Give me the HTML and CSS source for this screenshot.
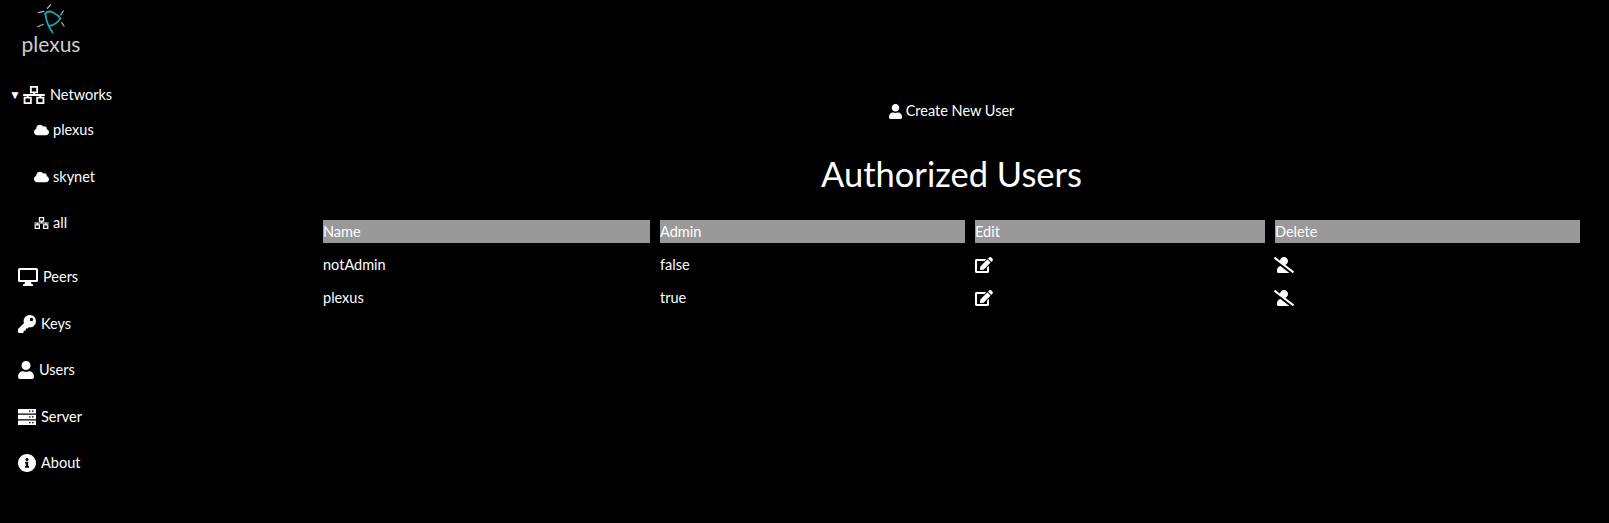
FILE: index.html
```html
<!DOCTYPE html>
<html lang="en">
<head>
<meta charset="utf-8">
<title>Plexus</title>
<link rel="stylesheet" href="styles.css">
</head>
<body>
<div class="app">
  <nav class="sidebar">
    <div class="logo">
      <svg class="logo-mark" viewBox="0 0 40 36">
        <g fill="none" stroke-linecap="round">
          <path d="M15 14 C17 11 20 11 23 12.500 C26 14 29 16.500 30.500 18.500 C28 22 24 25 19.500 26" stroke="#18a9b4" stroke-width="1.800"/>
          <path d="M15.500 14 C16 20 18.500 27 22.500 32.500" stroke="#18a9b4" stroke-width="1.800"/>
          <path d="M17.300 8.300 L20.700 4.700 M8.300 12.700 L14 11.300 M7.700 26.700 L13.300 24.300 M30.700 15 L33.300 11 M31.700 22.700 L34 26" stroke="#b5b5b5" stroke-width="1.200"/>
        </g>
      </svg>
      <div class="logo-text">plexus</div>
    </div>
    <ul class="nav">
      <li class="nav-row nav-networks">
        <span class="caret">▼</span>
        <svg class="ic ic-net" viewBox="0 0 24 20"><path fill="none" stroke="#fff" stroke-width="2" d="M8.500 1h7v6h-7zM1.500 13h7v6h-7zM15.500 13h7v6h-7zM12 7v3M0 10h24M5 10v3M19 10v3"/></svg>
        <span>Networks</span>
      </li>
      <li class="nav-row nav-sub">
        <svg class="ic ic-cloud" viewBox="0 0 640 512"><path fill="#fff" d="M537.6 226.6c4.1-10.7 6.400-22.400 6.400-34.600 0-53-43-96-96-96-19.700 0-38.100 6-53.300 16.200C367 64.200 315.300 32 256 32c-88.400 0-160 71.600-160 160 0 2.700.1 5.400.2 8.100C40.200 219.800 0 273.200 0 336c0 79.500 64.500 144 144 144h368c70.700 0 128-57.300 128-128 0-61.900-44-113.600-102.400-125.400z"/></svg>
        <span>plexus</span>
      </li>
      <li class="nav-row nav-sub">
        <svg class="ic ic-cloud" viewBox="0 0 640 512"><path fill="#fff" d="M537.6 226.6c4.1-10.7 6.400-22.400 6.400-34.600 0-53-43-96-96-96-19.700 0-38.100 6-53.300 16.200C367 64.200 315.300 32 256 32c-88.400 0-160 71.600-160 160 0 2.700.1 5.400.2 8.100C40.200 219.800 0 273.200 0 336c0 79.500 64.500 144 144 144h368c70.700 0 128-57.300 128-128 0-61.900-44-113.600-102.400-125.400z"/></svg>
        <span>skynet</span>
      </li>
      <li class="nav-row nav-sub">
        <svg class="ic ic-cloud" viewBox="0 0 24 20"><path fill="none" stroke="#fff" stroke-width="2" d="M8.500 1h7v6h-7zM1.500 13h7v6h-7zM15.500 13h7v6h-7zM12 7v3M0 10h24M5 10v3M19 10v3"/></svg>
        <span>all</span>
      </li>
      <li class="nav-row nav-main nav-peers">
        <svg class="ic ic-desktop" viewBox="0 0 20 18"><path fill="#fff" fill-rule="evenodd" d="M1.500 0h17A1.500 1.500 0 0 1 20 1.500v11a1.500 1.500 0 0 1-1.500 1.500H13l.5 2.200h1.500V18H5v-1.800h1.500L7 14H1.500A1.500 1.500 0 0 1 0 12.500v-11A1.500 1.500 0 0 1 1.500 0zM2 2v10h16V2z"/></svg>
        <span>Peers</span>
      </li>
      <li class="nav-row nav-main">
        <svg class="ic ic-main" viewBox="0 0 512 512"><path fill="#fff" d="M512 176.001C512 273.203 433.202 352 336 352c-11.220 0-22.190-1.062-32.827-3.069l-24.012 27.014A23.999 23.999 0 0 1 261.223 384H224v40c0 13.255-10.745 24-24 24h-40v40c0 13.255-10.745 24-24 24H24c-13.255 0-24-10.745-24-24v-78.059c0-6.365 2.529-12.470 7.029-16.971l161.802-161.802C163.108 213.814 160 195.271 160 176 160 78.798 238.797.001 335.999 0 433.488-.001 512 78.511 512 176.001zM336 128c0 26.510 21.490 48 48 48s48-21.490 48-48-21.490-48-48-48-48 21.490-48 48z"/></svg>
        <span>Keys</span>
      </li>
      <li class="nav-row nav-main">
        <svg class="ic ic-user" viewBox="0 0 448 512"><path fill="#fff" d="M224 256c70.700 0 128-57.300 128-128S294.700 0 224 0 96 57.300 96 128s57.300 128 128 128zm89.600 32h-16.700c-22.200 10.200-46.900 16-72.900 16s-50.600-5.800-72.900-16h-16.700C60.200 288 0 348.200 0 422.400V464c0 26.500 21.500 48 48 48h352c26.500 0 48-21.500 48-48v-41.600c0-74.200-60.200-134.400-134.400-134.400z"/></svg>
        <span>Users</span>
      </li>
      <li class="nav-row nav-main">
        <svg class="ic ic-main" viewBox="0 0 18 16"><path fill="#fff" fill-rule="evenodd" d="M0 0h18v4.500H0zM11 1.500v1.300h1.500V1.500zM14 1.500v1.300h1.500V1.500zM0 5.700h18v4.600H0zM11 7.300v1.300h1.500V7.300zM14 7.300v1.300h1.500V7.300zM0 11.500h18V16H0zM11 13v1.300h1.500V13zM14 13v1.300h1.500V13z"/></svg>
        <span>Server</span>
      </li>
      <li class="nav-row nav-main">
        <svg class="ic ic-main" viewBox="8 8 496 496"><path fill="#fff" d="M256 8C119.043 8 8 119.083 8 256c0 136.997 111.043 248 248 248s248-111.003 248-248C504 119.083 392.957 8 256 8zm0 110c23.196 0 42 18.804 42 42s-18.804 42-42 42-42-18.804-42-42 18.804-42 42-42zm56 254c0 6.627-5.373 12-12 12h-88c-6.627 0-12-5.373-12-12v-24c0-6.627 5.373-12 12-12h12v-64h-12c-6.627 0-12-5.373-12-12v-24c0-6.627 5.373-12 12-12h64c6.627 0 12 5.373 12 12v100h12c6.627 0 12 5.373 12 12v24z"/></svg>
        <span>About</span>
      </li>
    </ul>
  </nav>
  <main class="content">
    <div class="create">
      <svg class="ic ic-create" viewBox="0 0 448 512"><path fill="#fff" d="M224 256c70.700 0 128-57.300 128-128S294.700 0 224 0 96 57.300 96 128s57.300 128 128 128zm89.600 32h-16.700c-22.200 10.200-46.900 16-72.900 16s-50.600-5.800-72.900-16h-16.700C60.200 288 0 348.200 0 422.400V464c0 26.500 21.500 48 48 48h352c26.500 0 48-21.500 48-48v-41.600c0-74.200-60.200-134.400-134.400-134.400z"/></svg>
      <span>Create New User</span>
    </div>
    <h1 class="title">Authorized Users</h1>
    <table class="users">
      <colgroup><col class="c1"><col class="c2"><col class="c3"><col class="c4"></colgroup>
      <thead>
        <tr><th>Name</th><th>Admin</th><th>Edit</th><th>Delete</th></tr>
      </thead>
      <tbody>
        <tr>
          <td>notAdmin</td><td>false</td>
          <td><svg class="ic ic-edit" viewBox="0 0 576 512"><path fill="#fff" d="M402.600 83.200l90.200 90.200c3.800 3.800 3.800 10 0 13.800L274.400 405.600l-92.800 10.300c-12.400 1.400-22.900-9.100-21.500-21.500l10.300-92.800L388.800 83.200c3.800-3.800 10-3.800 13.800 0zm162-22.900l-48.800-48.800c-15.200-15.200-39.900-15.200-55.200 0l-35.400 35.400c-3.800 3.800-3.800 10 0 13.800l90.200 90.200c3.800 3.800 10 3.800 13.800 0l35.400-35.400c15.200-15.300 15.200-40 0-55.200zM384 346.200V448H64V128h229.800c3.200 0 6.200-1.300 8.500-3.500l40-40c7.600-7.600 2.200-20.500-8.500-20.500H48C21.500 64 0 85.500 0 112v352c0 26.500 21.500 48 48 48h352c26.500 0 48-21.500 48-48V306.200c0-10.700-12.900-16-20.500-8.500l-40 40c-2.200 2.300-3.500 5.300-3.500 8.500z"/></svg></td>
          <td><svg class="ic ic-del" viewBox="0 0 640 512"><path fill="#fff" d="M633.800 458.100L362.300 248.300C412.100 230.700 448 183.800 448 128 448 57.300 390.700 0 320 0c-67.100 0-121.500 51.800-126.900 117.400L45.500 3.400C38.500-2 28.500-.8 23 6.200L3.400 31.400c-5.400 7-4.200 17 2.800 22.400l588.400 454.700c7 5.400 17 4.200 22.500-2.800l19.600-25.300c5.400-6.800 4.100-16.900-2.900-22.300zM96 422.400V464c0 26.500 21.500 48 48 48h350.200L207.400 290.300C144.200 301.300 96 356 96 422.400z"/></svg></td>
        </tr>
        <tr>
          <td>plexus</td><td>true</td>
          <td><svg class="ic ic-edit" viewBox="0 0 576 512"><path fill="#fff" d="M402.600 83.200l90.200 90.200c3.800 3.800 3.800 10 0 13.800L274.400 405.600l-92.800 10.300c-12.400 1.400-22.900-9.100-21.500-21.500l10.300-92.800L388.800 83.200c3.800-3.800 10-3.800 13.800 0zm162-22.900l-48.800-48.800c-15.200-15.200-39.900-15.200-55.200 0l-35.400 35.400c-3.800 3.800-3.800 10 0 13.800l90.200 90.200c3.800 3.800 10 3.800 13.800 0l35.400-35.400c15.200-15.300 15.200-40 0-55.200zM384 346.200V448H64V128h229.800c3.200 0 6.200-1.300 8.500-3.500l40-40c7.600-7.600 2.200-20.500-8.500-20.500H48C21.500 64 0 85.500 0 112v352c0 26.500 21.500 48 48 48h352c26.500 0 48-21.500 48-48V306.200c0-10.700-12.900-16-20.500-8.500l-40 40c-2.200 2.300-3.500 5.300-3.500 8.500z"/></svg></td>
          <td><svg class="ic ic-del" viewBox="0 0 640 512"><path fill="#fff" d="M633.800 458.100L362.300 248.300C412.100 230.700 448 183.800 448 128 448 57.300 390.700 0 320 0c-67.100 0-121.500 51.800-126.900 117.400L45.500 3.400C38.500-2 28.500-.8 23 6.200L3.400 31.400c-5.400 7-4.200 17 2.800 22.400l588.400 454.700c7 5.400 17 4.200 22.500-2.800l19.600-25.300c5.400-6.800 4.100-16.900-2.900-22.300zM96 422.400V464c0 26.500 21.500 48 48 48h350.200L207.400 290.300C144.200 301.300 96 356 96 422.400z"/></svg></td>
        </tr>
      </tbody>
    </table>
  </main>
</div>
</body>
</html>
```
FILE: styles.css
```css
* { box-sizing: border-box; }
html, body { margin: 0; height: 100%; background: #000; }
body { color: #fff; font: 14.500px/22px "Lato", sans-serif; overflow: hidden; }
.app { display: flex; height: 523px; }
.sidebar { width: 313px; flex: none; }
.logo { width: 100px; display: flex; flex-direction: column; align-items: center; }
.logo-mark { width: 40px; height: 36px; display: block; }
.logo-text { font: 400 21px/24px "Lato", sans-serif; color: #ccc; margin-top: -4px; margin-left: 2px; }
.nav { list-style: none; margin: 28px 0 0; padding: 0; }
.nav-row { display: flex; align-items: center; height: 22px; }
.nav-networks { padding-left: 9px; }
.caret { font-size: 12px; width: 14px; }
.nav-sub { padding-left: 34px; margin-top: 24.500px; }
.nav-networks + .nav-sub { margin-top: 13px; }
.nav-main { padding-left: 18px; margin-top: 24.500px; }
.nav-peers { margin-top: 32px; }
.ic { display: block; flex: none; }
.ic-net { width: 22px; height: 18px; margin-right: 5px; }
.ic-cloud { width: 15px; height: 12px; margin-right: 4px; }
.ic-desktop { width: 20px; height: 18px; margin-right: 5px; }
.ic-main { width: 18px; height: 18px; margin-right: 5px; }
.ic-user { width: 16px; height: 18px; margin-right: 5px; }
.content { flex: none; width: 1277px; }
.create { display: flex; justify-content: center; align-items: center; margin-top: 100px; }
.ic-create { width: 13px; height: 15px; margin-right: 4px; }
.title { font: 400 34.500px/44px "Lato", sans-serif; text-align: center; margin: 30px 0 14px; }
.users { table-layout: fixed; width: 1277px; border-spacing: 10px; border-collapse: separate; }
.c1 { width: 327px; }
.c2 { width: 305px; }
.c3 { width: 290px; }
.c4 { width: 305px; }
.users th { background: #999; font-weight: 400; text-align: left; padding: 0; height: 23px; line-height: 23px; }
.users td { padding: 0; height: 23px; line-height: 23px; }
.ic-edit { width: 18px; height: 16px; }
.ic-del { width: 20px; height: 16px; margin-left: -1px; }
```
